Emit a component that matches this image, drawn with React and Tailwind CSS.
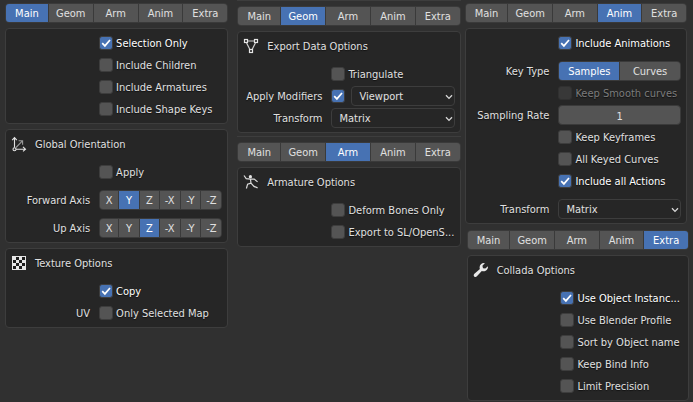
import { useState } from "react";

const TABS = ["Main", "Geom", "Arm", "Anim", "Extra"];
const AXES = ["X", "Y", "Z", "-X", "-Y", "-Z"];

function Tabs({ active }) {
  const [current, setCurrent] = useState(active);
  return (
    <div className="mb-[5px] grid h-5 grid-cols-[42fr_44fr_44fr_44fr_44fr] gap-px overflow-hidden rounded border border-[#3a3a3a] bg-[#3a3a3a]">
      {TABS.map((tab) => (
        <button
          key={tab}
          type="button"
          onClick={() => setCurrent(tab)}
          className={`pt-0.5 ${current === tab ? "bg-[#4772b3] text-white" : "bg-[#545454]"}`}
        >
          {tab}
        </button>
      ))}
    </div>
  );
}

function Panel({ children }) {
  return (
    <section className="mb-[5px] rounded border border-[#3d3d3d] bg-[#262626] px-[5px] py-[3px]">
      {children}
    </section>
  );
}

function Title({ icon, children }) {
  return (
    <h2 className="mb-1.5 flex h-[22px] items-center gap-2">
      {icon}
      <span className="pt-0.5">{children}</span>
    </h2>
  );
}

function Row({ label, htmlFor, spaced, children }) {
  return (
    <div
      className={`grid h-[22px] grid-cols-[79fr_123fr] items-center gap-x-[9px] ${spaced ? "mt-1.5" : ""}`}
    >
      {htmlFor ? (
        <label htmlFor={htmlFor} className="whitespace-nowrap pt-0.5 text-right">
          {label}
        </label>
      ) : (
        <span className="whitespace-nowrap pt-0.5 text-right">{label}</span>
      )}
      <div className="flex min-w-0 items-center">{children}</div>
    </div>
  );
}

function Tick({ id, checked = false, disabled = false }) {
  return (
    <span className="grid shrink-0">
      <input
        id={id}
        type="checkbox"
        defaultChecked={checked}
        disabled={disabled}
        className="peer col-start-1 row-start-1 size-[14px] appearance-none rounded-[3px] border border-[#3d3d3d] bg-[#545454] checked:bg-[#4772b3] disabled:border-[#303030] disabled:bg-[#383838]"
      />
      <svg
        viewBox="0 0 14 14"
        className="pointer-events-none invisible col-start-1 row-start-1 size-[14px] peer-checked:visible"
        fill="none"
        stroke="#fff"
        strokeWidth="1.7"
      >
        <path d="M3.2 7.2 5.9 9.9 11 4" />
      </svg>
    </span>
  );
}

function Check({ id, label, checked, disabled, side, spaced }) {
  const tone = disabled ? "text-[#7c7c7c]" : checked ? "text-white" : "";
  return (
    <Row label={side} spaced={spaced}>
      <Tick id={id} checked={checked} disabled={disabled} />
      <label htmlFor={id} className={`ml-[3px] whitespace-nowrap pt-0.5 ${tone}`}>
        {label}
      </label>
    </Row>
  );
}

function Segments({ items, active, columns, name }) {
  const [current, setCurrent] = useState(active);
  return (
    <div
      role="group"
      aria-label={name}
      className={`grid h-5 w-full gap-px overflow-hidden rounded border border-[#3a3a3a] bg-[#3a3a3a] ${columns}`}
    >
      {items.map((item) => (
        <button
          key={item}
          type="button"
          onClick={() => setCurrent(item)}
          className={`pt-0.5 ${current === item ? "bg-[#4772b3] text-white" : "bg-[#545454]"}`}
        >
          {item}
        </button>
      ))}
    </div>
  );
}

function Menu({ id, value, label }) {
  return (
    <span className="relative flex min-w-0 flex-1">
      <select
        id={id}
        aria-label={label}
        className="h-5 w-full appearance-none rounded border border-[#3d3d3d] bg-[#262626] pt-0.5 pl-[7px]"
      >
        <option>{value}</option>
      </select>
      <svg
        viewBox="0 0 8 6"
        className="pointer-events-none absolute top-[8px] right-[2px] h-[6px] w-2"
        fill="none"
        stroke="#d8d8d8"
        strokeWidth="1.3"
      >
        <path d="M1 1.2 4 4.4 7 1.2" />
      </svg>
    </span>
  );
}

function OrientationIcon() {
  return (
    <svg viewBox="0 0 16 16" className="size-4" fill="none" stroke="#e2e2e2" strokeWidth="1.1">
      <path d="M3.5 2v9.6M1.2 4.2 3.5 1.6l2.3 2.6M5 13.2h9.3M12 10.9l2.5 2.3-2.5 2.2" />
      <circle cx="3.5" cy="13.2" r="1.5" />
      <path d="M5 11.5 11.2 5.2M7.6 4.7h4v4" stroke="#9a9a9a" />
    </svg>
  );
}

function TextureIcon() {
  const cells = [];
  for (let y = 0; y < 4; y++) {
    for (let x = 0; x < 4; x++) {
      if ((x + y) % 2 === 1) cells.push([x, y]);
    }
  }
  return (
    <svg viewBox="0 0 16 16" className="size-4" shapeRendering="crispEdges">
      <rect x="1" y="1" width="14" height="14" fill="#e6e6e6" />
      {cells.map(([x, y]) => (
        <rect key={`${x}-${y}`} x={2 + x * 3} y={2 + y * 3} width="3" height="3" fill="#1c1c1c" />
      ))}
    </svg>
  );
}

function MeshIcon() {
  return (
    <svg viewBox="0 0 16 16" className="size-4" fill="none" stroke="#e6e6e6" strokeWidth="1.2">
      <path d="M4.5 3h7M3.6 5 6.9 11.5M12.4 5 9.1 11.5" stroke="#d0d0d0" />
      <rect x="1.5" y="1.5" width="3" height="3" />
      <rect x="11.5" y="1.5" width="3" height="3" />
      <rect x="6.5" y="11.5" width="3" height="3" />
    </svg>
  );
}

function ArmatureIcon() {
  return (
    <svg viewBox="0 0 16 16" className="size-4" fill="none" stroke="#dcdcdc" strokeWidth="1.2">
      <circle cx="7.4" cy="2.7" r="1.6" fill="#e6e6e6" stroke="none" />
      <path d="M1 1.5 3.2 4.6 7.5 5.2 11.2 5.1 14.6 7.9M7.5 5.2 8 9.2M8 9.2 4.6 10.2 3.4 14.5M8 9.2 11 12.4 14.6 13.9" />
    </svg>
  );
}

function WrenchIcon() {
  return (
    <svg viewBox="0 0 16 16" className="size-4" fill="#e8e8e8">
      <path d="M11.8 1.2C9.3.6 6.7 2.6 6.6 5.2c0 .7.1 1.2.3 1.7L1.4 11.8c-.9.9-.9 1.9-.2 2.7.8.8 1.9.7 2.7-.2l4.9-5.4c3 1.2 6.3-.7 6.2-4.7l-2.7 2.4-2.3-.4-.6-2.4z" />
    </svg>
  );
}

export default function App() {
  return (
    <main className="grid min-h-screen grid-cols-[223fr_224fr_224fr] overflow-hidden bg-[#303030] pl-[5px] pr-1 font-['DejaVu_Sans_Condensed','DejaVu_Sans',sans-serif] text-[11px] leading-[14px] text-[#e0e0e0] [text-shadow:0_1px_1px_rgba(0,0,0,0.6)]">
      <div className="mr-1 pt-[3px]">
        <Tabs active="Main" />
        <Panel>
          <Check id="selection" label="Selection Only" checked />
          <Check id="children" label="Include Children" />
          <Check id="armatures" label="Include Armatures" />
          <Check id="shapekeys" label="Include Shape Keys" />
        </Panel>
        <Panel>
          <Title icon={<OrientationIcon />}>Global Orientation</Title>
          <Check id="apply" label="Apply" />
          <Row label="Forward Axis" spaced>
            <Segments name="Forward Axis" items={AXES} active="Y" columns="grid-cols-[18fr_20fr_19fr_20fr_20fr_20fr]" />
          </Row>
          <Row label="Up Axis" spaced>
            <Segments name="Up Axis" items={AXES} active="Z" columns="grid-cols-[18fr_20fr_19fr_20fr_20fr_20fr]" />
          </Row>
        </Panel>
        <Panel>
          <Title icon={<TextureIcon />}>Texture Options</Title>
          <Check id="copy" label="Copy" checked />
          <Check id="uv" side="UV" label="Only Selected Map" />
        </Panel>
      </div>

      <div className="ml-[5px]">
        <div className="mb-[5px] border-t border-[#3d3d3d]" />
        <Tabs active="Geom" />
        <Panel>
          <Title icon={<MeshIcon />}>Export Data Options</Title>
          <Check id="triangulate" label="Triangulate" />
          <Row label="Apply Modifiers" htmlFor="modifiers">
            <Tick id="modifiers" checked />
            <span className="ml-1.5 flex min-w-0 flex-1">
              <Menu id="modifier-view" label="Modifier resolution" value="Viewport" />
            </span>
          </Row>
          <Row label="Transform" htmlFor="geom-transform">
            <Menu id="geom-transform" value="Matrix" />
          </Row>
        </Panel>
        <div className="-mt-0.5 mb-[5px] border-t border-[#3d3d3d]" />
        <Tabs active="Arm" />
        <Panel>
          <Title icon={<ArmatureIcon />}>Armature Options</Title>
          <Check id="deform" label="Deform Bones Only" />
          <Check id="opensim" label="Export to SL/OpenS..." />
        </Panel>
      </div>

      <div className="ml-1 pt-[3px]">
        <div className="mr-0.5">
          <Tabs active="Anim" />
          <Panel>
            <Check id="animations" label="Include Animations" checked />
            <Row label="Key Type" spaced>
              <Segments name="Key Type" items={["Samples", "Curves"]} active="Samples" columns="grid-cols-2" />
            </Row>
            <Check id="smooth" label="Keep Smooth curves" disabled />
            <Row label="Sampling Rate" htmlFor="rate">
              <input
                id="rate"
                type="text"
                defaultValue="1"
                className="h-5 w-full min-w-0 rounded border border-[#3a3a3a] bg-[#545454] pt-0.5 text-center"
              />
            </Row>
            <Check id="keyframes" label="Keep Keyframes" />
            <Check id="keyed" label="All Keyed Curves" />
            <Check id="actions" label="Include all Actions" checked />
            <Row label="Transform" htmlFor="anim-transform" spaced>
              <Menu id="anim-transform" value="Matrix" />
            </Row>
          </Panel>
        </div>
        <div className="ml-0.5 pt-px">
          <Tabs active="Extra" />
          <Panel>
            <Title icon={<WrenchIcon />}>Collada Options</Title>
            <Check id="instances" label="Use Object Instanc..." checked />
            <Check id="profile" label="Use Blender Profile" />
            <Check id="sort" label="Sort by Object name" />
            <Check id="bind" label="Keep Bind Info" />
            <Check id="precision" label="Limit Precision" />
          </Panel>
        </div>
      </div>
    </main>
  );
}
